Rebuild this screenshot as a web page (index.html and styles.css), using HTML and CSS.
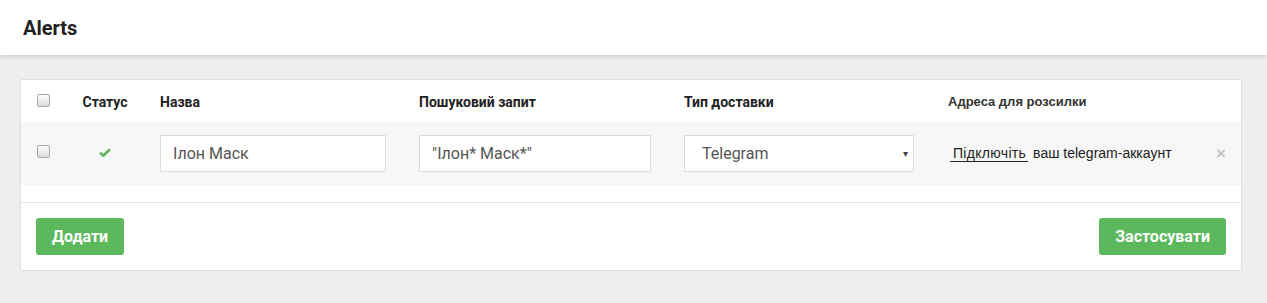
FILE: index.html
```
<!DOCTYPE html>
<html lang="uk">
<head>
    <meta charset="UTF-8">
    <meta name="viewport" content="width=device-width, initial-scale=1.0">
    <title>Alerts</title>
    <link rel="stylesheet" href="styles.css">
</head>
<body>
    <header class="topbar">
        <h1>Alerts</h1>
    </header>

    <main class="page">
        <div class="card">
            <div class="grid head-row">
                <div class="cell"><input type="checkbox" class="check"></div>
                <div class="cell status">Статус</div>
                <div class="cell">Назва</div>
                <div class="cell">Пошуковий запит</div>
                <div class="cell">Тип доставки</div>
                <div class="cell addr-title">Адреса для розсилки</div>
                <div class="cell"></div>
            </div>

            <div class="grid data-row">
                <div class="cell"><input type="checkbox" class="check"></div>
                <div class="cell status">
                    <svg class="ok" width="12" height="9" viewBox="0 0 12 9">
                        <path d="M1 4.6 L4.3 7.7 L11 1.2" fill="none" stroke="#5cb85c" stroke-width="2.6"/>
                    </svg>
                </div>
                <div class="cell"><input type="text" class="field" value="Ілон Маск"></div>
                <div class="cell"><input type="text" class="field" value="&quot;Ілон* Маск*&quot;"></div>
                <div class="cell">
                    <div class="select">
                        <span>Telegram</span>
                        <span class="arrow">&#9662;</span>
                    </div>
                </div>
                <div class="cell addr">
                    <a href="#" class="connect">Підключіть</a> ваш telegram-аккаунт
                </div>
                <div class="cell"><span class="remove">&times;</span></div>
            </div>

            <div class="card-footer">
                <button class="btn">Додати</button>
                <button class="btn">Застосувати</button>
            </div>
        </div>
    </main>
</body>
</html>
```

FILE: styles.css
```
body {
    margin: 0;
    background-color: #eeeeee;
    font-family: Roboto, 'Liberation Sans', Arial, sans-serif;
    color: #333;
}
.topbar {
    background-color: #fff;
    height: 55px;
    display: flex;
    align-items: center;
    padding-left: 23px;
    box-shadow: 0 2px 4px rgba(0, 0, 0, 0.12);
}
.topbar h1 {
    margin: 0;
    font-size: 20px;
    font-weight: 700;
    color: #222;
    padding-top: 1px;
}
.page {
    padding: 24px 25px 32px 20px;
}
.card {
    background-color: #fff;
    border: 1px solid #dedede;
    border-radius: 2px;
}

/* --- table rows --- */
.grid {
    display: grid;
    grid-template-columns: 13px 44px 226px 232px 230px 1fr 10px;
    column-gap: 33px;
    padding: 0 15px 0 16px;
    align-items: center;
}
.head-row {
    height: 42px;
    font-size: 14px;
    font-weight: 700;
    color: #222;
}
.head-row .cell {
    padding-top: 1px;
}
.addr-title {
    font-family: 'Liberation Sans', Arial, sans-serif;
    font-size: 13px;
    color: #333;
    margin-left: 1px;
}
.data-row {
    height: 63px;
    background-color: #f7f7f7;
}
.cell {
    display: flex;
    align-items: center;
}
.status {
    justify-content: center;
}
.check {
    appearance: none;
    width: 13px;
    height: 13px;
    margin: 0;
    border: 1px solid #a9a9a9;
    border-radius: 2px;
    background: linear-gradient(#fdfdfd, #dcdcdc);
}
.head-row .check {
    margin-top: -3px;
}
.data-row .check {
    margin-top: -4px;
}
.ok {
    margin-top: -3px;
}
.field {
    box-sizing: border-box;
    width: 100%;
    height: 37px;
    margin-top: -1px;
    border: 1px solid #dcdcdc;
    background-color: #fff;
    padding: 0 12px;
    font-family: Roboto, sans-serif;
    font-size: 16px;
    color: #555;
    outline: none;
}
.select {
    box-sizing: border-box;
    width: 100%;
    height: 37px;
    margin-top: -1px;
    border: 1px solid #dcdcdc;
    background-color: #fff;
    padding: 0 5px 0 17px;
    display: flex;
    align-items: center;
    justify-content: space-between;
    font-size: 16px;
    color: #555;
}
.arrow {
    font-size: 10px;
    color: #444;
}
.addr {
    font-family: 'Liberation Sans', Arial, sans-serif;
    font-size: 14px;
    color: #222;
    margin-top: -1px;
    margin-left: 3px;
    white-space: nowrap;
}
.connect {
    color: #222;
    text-decoration: none;
    border-bottom: 1px solid #222;
    padding: 0 2px 0 3px;
    margin-right: 5px;
    letter-spacing: 0.3px;
}
.remove {
    color: #c4c4c4;
    font-family: 'Liberation Sans', Arial, sans-serif;
    font-size: 17px;
    font-weight: 700;
}
.card-footer {
    margin-top: 17px;
    border-top: 1px solid #e6e6e6;
    padding: 15px;
    display: flex;
    justify-content: space-between;
}
.btn {
    background-color: #5cb85c;
    color: #fff;
    border: none;
    border-radius: 3px;
    height: 37px;
    padding: 0 16px;
    font-family: Roboto, sans-serif;
    font-size: 16px;
    font-weight: 700;
    cursor: pointer;
}
```
